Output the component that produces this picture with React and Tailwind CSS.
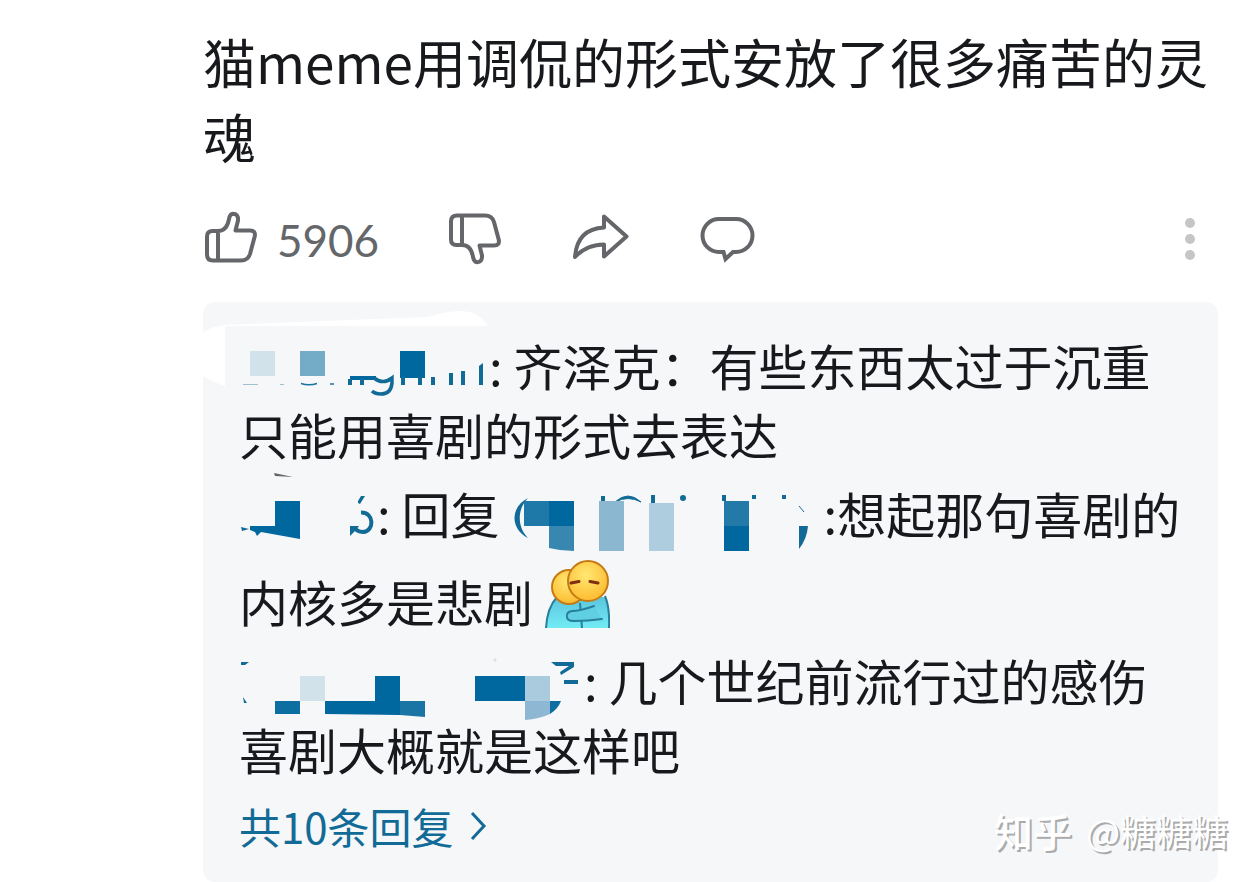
const ThumbIcon = ({ className = "" }) => (
  <svg
    viewBox="0 0 56 56"
    className={`h-14 w-14 ${className}`}
    fill="none"
    stroke="currentColor"
    strokeWidth="4"
    strokeLinejoin="round"
    aria-hidden="true"
  >
    <path d="M15 21H9.500Q4 21 4 26.500V44.500Q4 50.500 10 50.500H38Q45 50.500 47 44L51.700 26.500Q53 20.500 47 20.500H32.500L35 10.500Q35.500 3.800 30 3.800Q27 4 26 9Q24 21 15 21V50.500" />
  </svg>
);

const ShareIcon = () => (
  <svg
    viewBox="0 0 60 56"
    className="h-14 w-[60px]"
    fill="none"
    stroke="currentColor"
    strokeWidth="4"
    strokeLinejoin="round"
    aria-hidden="true"
  >
    <path d="M4 47Q6 19 33 17.500V6.500L55.500 26.500L33 46.500V34.500Q15 35 4 47Z" />
  </svg>
);

const CommentIcon = () => (
  <svg
    viewBox="0 0 58 56"
    className="h-14 w-[58px]"
    fill="none"
    stroke="currentColor"
    strokeWidth="4"
    aria-hidden="true"
  >
    <path d="M20 9H37A16.500 16.500 0 0 1 37 42H34L26.500 49L24.500 42H20A16.500 16.500 0 0 1 20 9Z" />
  </svg>
);

const HugEmoji = () => (
  <svg viewBox="0 0 65 68" className="mt-[13px] -mb-1.5 ml-3 inline-block h-[68px] w-[65px] align-baseline" role="img" aria-label="抱抱">
    <defs>
      <linearGradient id="body" x1="0" y1="0" x2="0" y2="1">
        <stop offset="0" stopColor="#5cc4dc" />
        <stop offset="1" stopColor="#72ecf6" />
      </linearGradient>
      <radialGradient id="face" cx="0.45" cy="0.35" r="0.65">
        <stop offset="0" stopColor="#ffe873" />
        <stop offset="1" stopColor="#fdbb30" />
      </radialGradient>
    </defs>
    <path d="M1 68Q2 48 12 37H60Q65 48 64 68Z" fill="url(#body)" />
    <path d="M1 68Q2 48 12 37M60 36Q65 48 64 68" fill="none" stroke="#287f9b" strokeWidth="2" />
    <circle cx="24" cy="27" r="17" fill="url(#face)" stroke="#c47b16" strokeWidth="2" />
    <path d="M35 43L37 68" stroke="#287f9b" strokeWidth="2" />
    <path d="M49 46Q35 51 27 51Q21 52 22 57Q22 61 29 61Q43 61 57 59" fill="#60cfe2" stroke="#287f9b" strokeWidth="2" strokeLinecap="round" />
    <circle cx="43" cy="21" r="20" fill="url(#face)" stroke="#c47b16" strokeWidth="2" />
    <path d="M26 23L34 21.500M45 21.500L53 23" stroke="#7d2f10" strokeWidth="3" strokeLinecap="round" />
  </svg>
);

// user names are hidden behind mosaic blocks
const FirstName = () => (
  <svg viewBox="0 0 248 60" className="-my-2 ml-0.5 inline-block h-[60px] w-[248px] align-middle" role="img" aria-label="已打码用户">
    <rect x="9" y="8" width="25" height="25" fill="#d2e2ea" />
    <rect x="59" y="8" width="25" height="25" fill="#74acc8" />
    <rect x="159" y="8" width="25" height="27" fill="#00689e" />
    <rect x="109" y="33" width="26" height="4" fill="#00689e" />
    <path d="M2 41.500H17M39 41.500H43" stroke="#9fc0d0" />
    <path d="M60 40.500Q68 43 76 40.500M89 41H93" fill="none" stroke="#1b739d" strokeWidth="1.500" />
    <path d="M109 36V42M121 36V42M162 34V42M179 34V42M192 34V42M210 30V42M222 28V42" stroke="#126b96" strokeWidth="4" />
    <path d="M238 23L242 20V42H238Z" fill="#126b96" />
    <path d="M133 35Q142 42 151 35V40Q150 51 140 51Q134 51 131 48" fill="none" stroke="#126b96" strokeWidth="3.500" />
  </svg>
);

const SecondName = () => (
  <svg viewBox="0 0 136 60" className="-my-2 ml-0.5 inline-block h-[60px] w-[136px] overflow-visible align-middle" role="img" aria-label="已打码用户">
    <path d="M33 -18L52 -14L34 -15Z" fill="#666" />
    <path d="M34 10H59V48L20 41L16 45L14 41L9 39V35H34Z" fill="#00689e" />
    <path d="M0 36L8 38L1 40Z" fill="#126b96" />
    <path d="M117 12V10L120 5H124L119 13Z" fill="#126b96" />
    <path d="M120 21.500C133 21 134 40 122 41Q116 41 113 36" fill="none" stroke="#126b96" strokeWidth="4" />
    <path d="M109 35H118L115 39L109 45Z" fill="#126b96" />
  </svg>
);

const ReplyTarget = () => (
  <svg viewBox="0 0 311 60" className="-my-2 ml-0.5 inline-block h-[60px] w-[311px] overflow-visible align-middle" role="img" aria-label="已打码用户">
    <path d="M15 7C-3 16 -3 38 15 47C4 36 4 18 15 7Z" fill="#126b96" />
    <rect x="11" y="10" width="25" height="25" fill="#1f79a8" />
    <rect x="36" y="10" width="25" height="25" fill="#00689e" />
    <path d="M36 35H61V60Q48 60 36 57Z" fill="#3787b1" />
    <path d="M88 5H92V10H88ZM138 4H142V12H138ZM209 4H213V10H209ZM239 4H243V8H239ZM269 4H273V8H269Z" fill="#126b96" />
    <path d="M102 11Q115 -1 128 11Q115 4 102 11Z" fill="#126b96" stroke="#126b96" />
    <circle cx="170" cy="7" r="3" fill="#126b96" />
    <rect x="86" y="10" width="25" height="50" fill="#8cb7d0" />
    <rect x="136" y="12" width="25" height="48" fill="#aecddf" />
    <rect x="211" y="10" width="25" height="25" fill="#237aa8" />
    <rect x="211" y="35" width="25" height="25" fill="#00689e" />
    <path d="M286 15L291 21" stroke="#126b96" />
    <path d="M286 35H295Q294 48 286 58Z" fill="#126b96" />
  </svg>
);

const ThirdName = () => (
  <svg viewBox="0 8 343 60" className="-my-2 ml-0.5 inline-block h-[60px] w-[343px] overflow-visible align-middle" role="img" aria-label="已打码用户">
    <path d="M0 12H8L4 15H0ZM2 47L6 53H3Z" fill="#126b96" />
    <rect x="59" y="26" width="25" height="25" fill="#d2e2ea" />
    <rect x="34" y="51" width="25" height="13" fill="#0d6fa1" />
    <path d="M134 26H159V65L84 64V51H134Z" fill="#00689e" />
    <path d="M159 51H184V67L159 65Z" fill="#1a75a4" />
    <rect x="234" y="26" width="50" height="25" fill="#00689e" />
    <rect x="284" y="26" width="25" height="25" fill="#aacadd" />
    <path d="M284 51H309V64Q298 69 284 70Z" fill="#8db7d2" />
    <path d="M309 51H320Q317 59 309 64Z" fill="#0d6fa1" />
    <circle cx="254" cy="10" r="1.500" fill="#dcdfe1" />
    <path d="M310 12H333V17L320 25L319 22L328 16H315ZM323 30H337V34H323Z" fill="#126b96" />
  </svg>
);

const App = () => {
  return (
    <main className="relative min-h-screen bg-white pt-6 pr-[42px] pl-[203px] font-['Noto_Sans_CJK_SC',sans-serif] text-[#17191c]">
      <p className="text-[53px] leading-[75px]">
        猫meme用调侃的形式安放了很多痛苦的灵魂
      </p>

      <div className="mt-9 flex items-center gap-[68px] text-[#646669]">
        <button type="button" aria-label="赞同" className="flex items-center gap-[18px]">
          <ThumbIcon />
          <span className="pt-1 font-['Lato',sans-serif] text-[44px] leading-[52px]">5906</span>
        </button>
        <button type="button" aria-label="反对">
          <ThumbIcon className="-scale-y-100" />
        </button>
        <button type="button" aria-label="分享">
          <ShareIcon />
        </button>
        <button type="button" aria-label="评论">
          <CommentIcon />
        </button>
        <button type="button" aria-label="更多" className="mr-5 ml-auto">
          <svg viewBox="0 0 16 56" className="h-14 w-4" fill="#c6c6c6" aria-hidden="true">
            <circle cx="8" cy="13" r="5" />
            <circle cx="8" cy="29" r="5" />
            <circle cx="8" cy="45" r="5" />
          </svg>
        </button>
      </div>

      <section className="relative mt-9 rounded-xl bg-[#f5f7f9] pt-7 pr-8 pb-6 pl-9">
        <svg viewBox="0 0 288 90" className="absolute top-0 left-0 h-[90px] w-[288px]" fill="#fff" aria-hidden="true">
          <path d="M0 31Q8 24 22 23L120 19L225 15Q242 9 257 9Q276 9 285 24H22V84Q10 80 0 74Z" />
        </svg>

        <div className="relative flex flex-col gap-[10px] text-[49px] leading-[69px]">
          <p>
            <FirstName />: 齐泽克：有些东西太过于沉重只能用喜剧的形式去表达
          </p>
          <p>
            <SecondName />: 回复 <ReplyTarget />:想起那句喜剧的内核多是悲剧
            <HugEmoji />
          </p>
          <p>
            <ThirdName />: 几个世纪前流行过的感伤喜剧大概就是这样吧
          </p>
        </div>

        <a href="#replies" className="mt-[11px] inline-flex items-center gap-[14px] text-[42px] leading-[64px] text-[#126b96]">
          共10条回复
          <svg viewBox="0 0 20 32" className="h-8 w-5" fill="none" stroke="currentColor" strokeWidth="3" aria-hidden="true">
            <path d="M4 3L16 16L4 29" />
          </svg>
        </a>
      </section>

      <div className="absolute right-8 bottom-6 flex items-center gap-[14px] text-[36px] leading-[56px] text-white [text-shadow:2px_2px_0_#ababab]">
        <span className="text-[39px] font-medium">知乎</span>
        <span>@糖糖糖</span>
      </div>
    </main>
  );
};

export default App;
